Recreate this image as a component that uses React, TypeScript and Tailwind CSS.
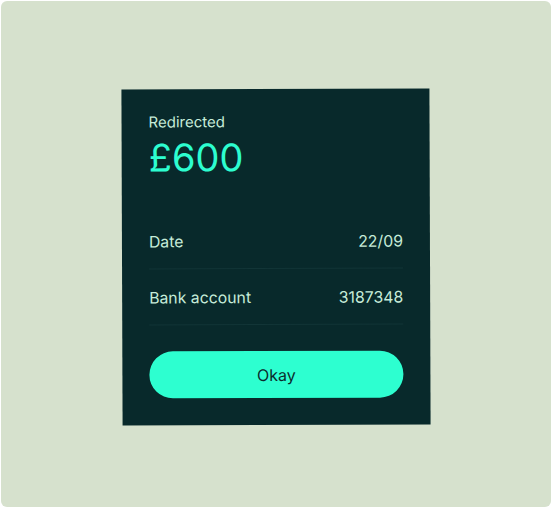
import React from "react";

const rows = [
  { label: "Date", value: "22/09" },
  { label: "Bank account", value: "3187348" },
];

const App: React.FC = () => {
  return (
    <div className="w-[552px] h-[508px] bg-white p-px" style={{ fontFamily: "Inter, 'Noto Sans', sans-serif" }}>
      <div className="w-full h-full rounded-md bg-[#d6e1cd] flex items-center justify-center pt-[5px]">
        <div className="w-[308px] h-[336px] bg-[#08292b] px-[27px] pt-[23px] flex flex-col rotate-[-0.2deg]">
          <p className="text-[15px] leading-[20px] text-[#c6ecd9]">Redirected</p>
          <p className="text-[38px] leading-[44px] text-[#2dfdd0] mt-[3px]">£600</p>
          <div className="mt-[34px]">
            {rows.map(row => (
              <div
                key={row.label}
                className="flex justify-between items-center pt-[19px] pb-[16px] border-b border-[#123537] text-[15.8px] leading-[20px] text-[#c6ecd9]"
              >
                <span>{row.label}</span>
                <span>{row.value}</span>
              </div>
            ))}
          </div>
          <button className="mt-[26px] h-[47px] w-full rounded-full bg-[#2dffd0] text-[16px] text-[#0b2a2b]">
            Okay
          </button>
        </div>
      </div>
    </div>
  );
};

export default App;
